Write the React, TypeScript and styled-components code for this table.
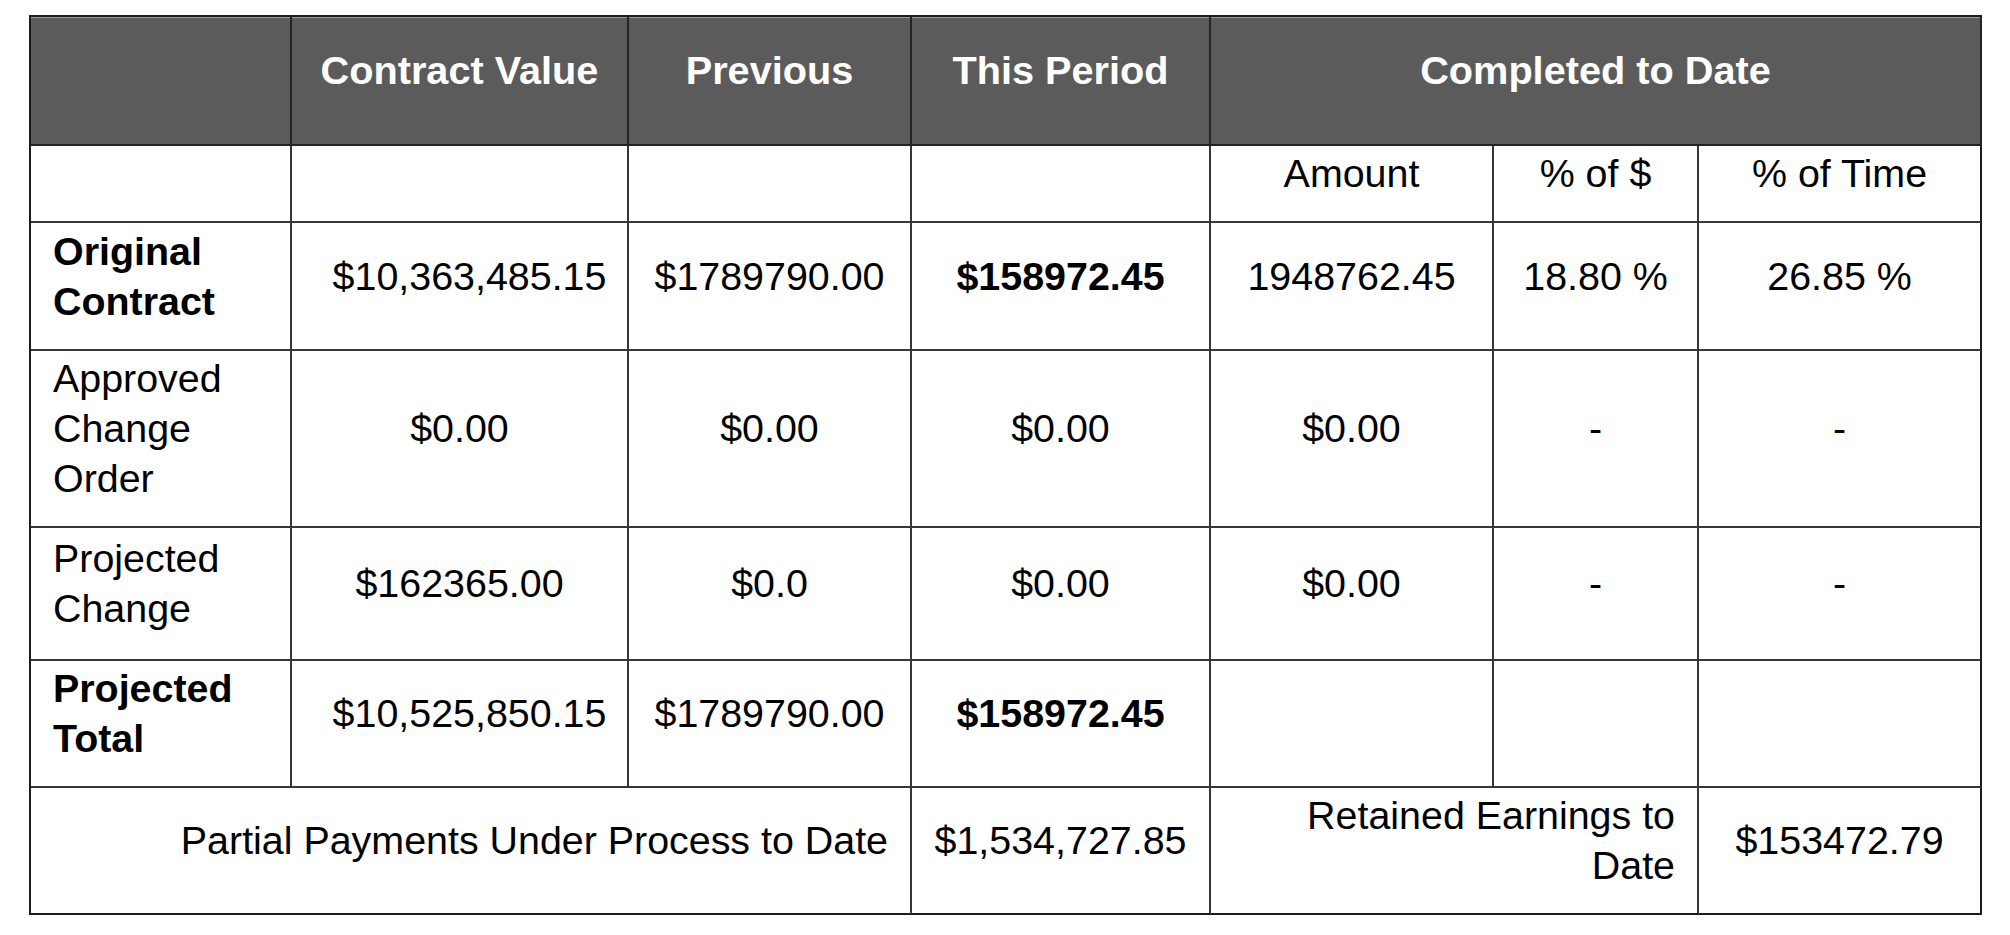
import React from "react";
import styled, { createGlobalStyle } from "styled-components";

const GlobalStyle = createGlobalStyle`
  html, body {
    margin: 0;
    padding: 0;
    background: #ffffff;
  }
  body {
    font-family: "Liberation Sans", Arial, sans-serif;
  }
`;

const Page = styled.div`
  padding: 15px 0 0 29px;
  background: #ffffff;
`;

const Table = styled.table`
  width: 1953px;
  table-layout: fixed;
  border-collapse: separate;
  border-spacing: 0;
  border-top: 2px solid #1c1c1c;
  border-left: 2px solid #1c1c1c;
  font-family: "Liberation Sans", Arial, sans-serif;
  font-size: 39.4px;
  line-height: 50px;
  color: #000000;
`;

const Row = styled.tr<{ $h: number }>`
  height: ${(p) => p.$h}px;
`;

const Cell = styled.td<{ $align?: "left" | "center" | "right"; $bold?: boolean; $shift?: number; $last?: boolean }>`
  box-sizing: border-box;
  padding: 2px ${(p) => 22 - (p.$shift ?? 0)}px 23px ${(p) => 22 + (p.$shift ?? 0)}px;
  border-right: 2px solid ${(p) => (p.$last ? "#1c1c1c" : "#363636")};
  border-bottom: 2px solid #363636;
  text-align: ${(p) => p.$align ?? "center"};
  font-weight: ${(p) => (p.$bold ? 700 : 400)};
  vertical-align: middle;
  background: #ffffff;
`;

const HeadCell = styled.th<{ $last?: boolean }>`
  box-sizing: border-box;
  padding: 2px 22px 23px 22px;
  background: #5b5b5b;
  color: #ffffff;
  font-size: 39.7px;
  font-weight: 700;
  text-align: center;
  vertical-align: middle;
  border-right: 2px solid #242424;
  border-bottom: 2px solid #242424;
  box-shadow: inset 0 1px 0 #9c9c9c;
`;

const FootRow = styled(Row)`
  & > td {
    border-bottom-color: #1c1c1c;
  }
`;

const widths = [261, 337, 283, 299, 283, 205, 283];

type RowData = {
  label: string;
  labelBold?: boolean;
  h: number;
  values: { text: string; bold?: boolean; shift?: number }[];
};

const rows: RowData[] = [
  {
    label: "Original Contract",
    labelBold: true,
    h: 128,
    values: [
      { text: "$10,363,485.15", shift: 10 },
      { text: "$1789790.00" },
      { text: "$158972.45", bold: true },
      { text: "1948762.45" },
      { text: "18.80 %" },
      { text: "26.85 %" },
    ],
  },
  {
    label: "Approved Change Order",
    h: 177,
    values: [
      { text: "$0.00" },
      { text: "$0.00" },
      { text: "$0.00" },
      { text: "$0.00" },
      { text: "-" },
      { text: "-" },
    ],
  },
  {
    label: "Projected Change",
    h: 133,
    values: [
      { text: "$162365.00" },
      { text: "$0.0" },
      { text: "$0.00" },
      { text: "$0.00" },
      { text: "-" },
      { text: "-" },
    ],
  },
  {
    label: "Projected Total",
    labelBold: true,
    h: 127,
    values: [
      { text: "$10,525,850.15", shift: 10 },
      { text: "$1789790.00" },
      { text: "$158972.45", bold: true },
      { text: "" },
      { text: "" },
      { text: "" },
    ],
  },
];

export default function App() {
  return (
    <>
      <GlobalStyle />
      <Page>
        <Table>
          <colgroup>
            {widths.map((w, i) => (
              <col key={i} style={{ width: `${w}px` }} />
            ))}
          </colgroup>
          <thead>
            <Row $h={129}>
              <HeadCell></HeadCell>
              <HeadCell>Contract Value</HeadCell>
              <HeadCell>Previous</HeadCell>
              <HeadCell>This Period</HeadCell>
              <HeadCell colSpan={3}>Completed to Date</HeadCell>
            </Row>
          </thead>
          <tbody>
            <Row $h={77}>
              <Cell></Cell>
              <Cell></Cell>
              <Cell></Cell>
              <Cell></Cell>
              <Cell>Amount</Cell>
              <Cell>% of $</Cell>
              <Cell $last>% of Time</Cell>
            </Row>
            {rows.map((r) => (
              <Row key={r.label} $h={r.h}>
                <Cell $align="left" $bold={r.labelBold}>
                  {r.label}
                </Cell>
                {r.values.map((v, i) => (
                  <Cell key={i} $bold={v.bold} $shift={v.shift} $last={i === r.values.length - 1}>
                    {v.text}
                  </Cell>
                ))}
              </Row>
            ))}
            <FootRow $h={127}>
              <Cell colSpan={3} $align="right">
                Partial Payments Under Process to Date
              </Cell>
              <Cell>$1,534,727.85</Cell>
              <Cell colSpan={2} $align="right">
                Retained Earnings to Date
              </Cell>
              <Cell $last>$153472.79</Cell>
            </FootRow>
          </tbody>
        </Table>
      </Page>
    </>
  );
}
